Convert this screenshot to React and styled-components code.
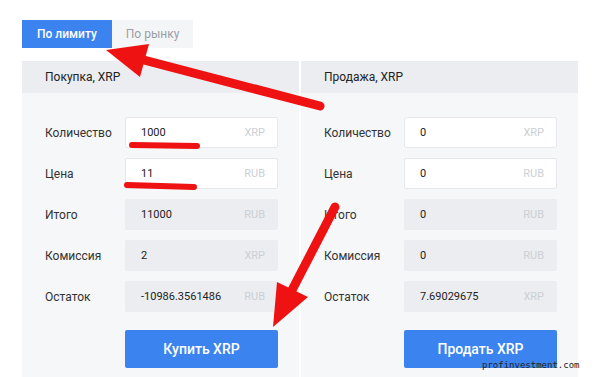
import React from "react";
import styled, { createGlobalStyle } from "styled-components";

const Global = createGlobalStyle`
  html, body { margin: 0; padding: 0; background: #ffffff; }
  body { font-family: Roboto, "Noto Sans", Arial, sans-serif; overflow: hidden; }
  * { box-sizing: border-box; }
`;

const Page = styled.div`
  position: relative;
  width: 594px;
  height: 377px;
  padding: 20px 0 0 22px;
  overflow: hidden;
`;

const Tabs = styled.div`
  display: flex;
  height: 28px;
`;

const Tab = styled.div`
  height: 28px;
  line-height: 28px;
  padding: 0 ${(p) => (p.$active ? "15px" : "14px")};
  font-size: 12px;
  font-weight: ${(p) => (p.$active ? 500 : 400)};
  background: ${(p) => (p.$active ? "#3b84f0" : "#f4f5f6")};
  color: ${(p) => (p.$active ? "#ffffff" : "#9a9fa6")};
`;

const Panels = styled.div`
  display: grid;
  grid-template-columns: 277px 277px;
  column-gap: 2px;
  margin-top: 13px;
`;

const Panel = styled.div`
  background: #f6f7f8;
  height: 316px;
`;

const PanelHeader = styled.div`
  height: 32px;
  line-height: 32px;
  background: #ebedf0;
  padding-left: 23px;
  font-size: 12px;
  color: #222;
`;

const PanelBody = styled.div`
  display: flex;
  flex-direction: column;
  gap: 10px;
  padding: 24px 0 0 23px;
`;

const Row = styled.div`
  display: grid;
  grid-template-columns: 80px 153px;
  align-items: center;
  height: 31px;
`;

const Label = styled.div`
  font-size: 12px;
  color: #333;
`;

const Field = styled.div`
  display: flex;
  align-items: center;
  justify-content: space-between;
  height: 31px;
  padding: 0 12px 0 15px;
  background: ${(p) => (p.$readonly ? "#ebedf0" : "#ffffff")};
  border: 1px solid ${(p) => (p.$readonly ? "#ebedf0" : "#e6e8eb")};
  border-radius: 2px;
  font-size: 11px;
  color: #222;
`;

const Unit = styled.span`
  font-size: 11px;
  color: #ccd0d5;
`;

const ActionButton = styled.div`
  margin: 8px 0 0 80px;
  width: 153px;
  height: 38px;
  line-height: 38px;
  text-align: center;
  background: #3b84f0;
  color: #fff;
  font-size: 14px;
  font-weight: 500;
  border-radius: 2px;
`;

const Overlay = styled.svg`
  position: absolute;
  left: 0;
  top: 0;
  width: 594px;
  height: 377px;
  pointer-events: none;
`;

const Watermark = styled.div`
  position: absolute;
  left: 482px;
  top: 359px;
  font-family: "DejaVu Sans Mono", "Liberation Mono", monospace;
  font-size: 9px;
  line-height: 12px;
  color: #222;
`;

const buy = [
  { label: "Количество", value: "1000", unit: "XRP" },
  { label: "Цена", value: "11", unit: "RUB" },
  { label: "Итого", value: "11000", unit: "RUB", ro: true },
  { label: "Комиссия", value: "2", unit: "XRP", ro: true },
  { label: "Остаток", value: "-10986.3561486", unit: "RUB", ro: true },
];

const sell = [
  { label: "Количество", value: "0", unit: "XRP" },
  { label: "Цена", value: "0", unit: "RUB" },
  { label: "Итого", value: "0", unit: "RUB", ro: true },
  { label: "Комиссия", value: "0", unit: "RUB", ro: true },
  { label: "Остаток", value: "7.69029675", unit: "XRP", ro: true },
];

function OrderPanel({ title, rows, action }) {
  return (
    <Panel>
      <PanelHeader>{title}</PanelHeader>
      <PanelBody>
        {rows.map((r) => (
          <Row key={r.label}>
            <Label>{r.label}</Label>
            <Field $readonly={r.ro}>
              <span>{r.value}</span>
              <Unit>{r.unit}</Unit>
            </Field>
          </Row>
        ))}
        <ActionButton>{action}</ActionButton>
      </PanelBody>
    </Panel>
  );
}

export default function App() {
  const red = "#ee1212";
  return (
    <>
      <Global />
      <Page>
        <Tabs>
          <Tab $active>По лимиту</Tab>
          <Tab>По рынку</Tab>
        </Tabs>
        <Panels>
          <OrderPanel title="Покупка, XRP" rows={buy} action="Купить XRP" />
          <OrderPanel title="Продажа, XRP" rows={sell} action="Продать XRP" />
        </Panels>
        <Overlay viewBox="0 0 594 377">
          <line x1="132" y1="145" x2="197" y2="146" stroke={red} strokeWidth="6" strokeLinecap="round" />
          <line x1="127" y1="185" x2="194" y2="187" stroke={red} strokeWidth="6" strokeLinecap="round" />
          <line x1="320" y1="106" x2="140" y2="59" stroke={red} strokeWidth="9" strokeLinecap="round" />
          <polygon points="106,50 149,44 140,77" fill={red} />
          <line x1="335" y1="207" x2="290" y2="294" stroke={red} strokeWidth="9" strokeLinecap="round" />
          <polygon points="273,327 308,297 277,282" fill={red} />
        </Overlay>
        <Watermark>profinvestment.com</Watermark>
      </Page>
    </>
  );
}
